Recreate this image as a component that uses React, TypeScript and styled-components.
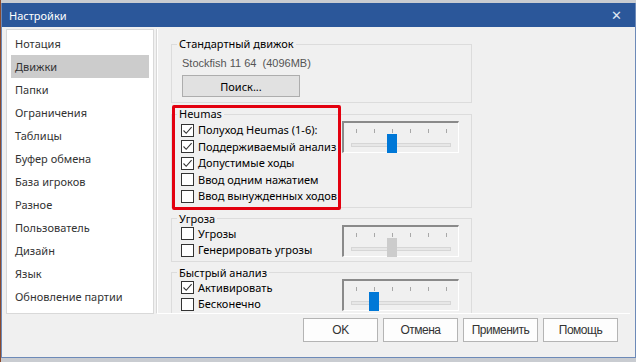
import styled, { createGlobalStyle } from "styled-components";

const GlobalStyle = createGlobalStyle`
  html, body {
    margin: 0;
    padding: 0;
    background: #ffffff;
  }
  * {
    box-sizing: border-box;
  }
`;

const Screen = styled.div`
  width: 638px;
  height: 362px;
  overflow: hidden;
  padding: 3px 2px 4px 1px;
  background: linear-gradient(to right, #8c4a2c 0, #8c4a2c 1px, #c9ccd1 1px, #c9ccd1 636px, #ffffff 636px);
  font-family: "Noto Sans", "Open Sans", sans-serif;
`;

const Dialog = styled.div`
  width: 635px;
  height: 355px;
  background: #f0f0f0;
  border: 1px solid #6d8ab8;
  border-top: none;
  display: flex;
  flex-direction: column;
`;

const TitleBar = styled.div`
  height: 24px;
  background: #2b579a;
  color: #ffffff;
  display: flex;
  align-items: center;
  justify-content: space-between;
  padding: 0 13px 0 7px;
  font-size: 11px;
`;

const Close = styled.span`
  font-size: 13px;
  color: #dfe6f1;
`;

const Body = styled.div`
  display: flex;
  padding: 2px 5px 0 4px;
`;

const Nav = styled.div`
  width: 148px;
  height: 285px;
  background: #ffffff;
  border: 1px solid #d9d9d9;
  padding: 2px 4px 0 4px;
  display: flex;
  flex-direction: column;
`;

const NavItem = styled.div<{ $active?: boolean }>`
  height: 23px;
  line-height: 23px;
  padding-left: 4px;
  font-size: 11px;
  color: #333333;
  background: ${(p) => (p.$active ? "#cccccc" : "transparent")};
`;

const Panel = styled.div`
  flex: 1;
  height: 285px;
  margin-left: 2px;
  border-left: 1px solid #d9d9d9;
  border-bottom: 1px solid #ffffff;
  box-shadow: inset 1px 0 0 #ffffff;
  overflow: hidden;
  padding: 7px 0 0 14px;
  display: flex;
  flex-direction: column;
  gap: 3px;
`;

const Group = styled.fieldset<{ $pb: number }>`
  position: relative;
  width: 301px;
  margin: 0;
  border: 1px solid #dcdcdc;
  padding: 0 0 ${(p) => p.$pb}px 9px;
  min-width: 0;
`;

const Legend = styled.legend`
  padding: 0 2px;
  margin-left: -4px;
  font-size: 11px;
  color: #000000;
  line-height: 16px;
`;

const EngineName = styled.div`
  font-family: "Liberation Sans", Arial, sans-serif;
  font-size: 11px;
  color: #555555;
  height: 20px;
  line-height: 20px;
  padding-left: 1px;
  margin-top: 1px;
`;

const SearchButton = styled.button`
  width: 118px;
  height: 22px;
  margin: 2px 0 0 1px;
  background: #e1e1e1;
  border: 1px solid #adadad;
  font-family: "Noto Sans", sans-serif;
  font-size: 11px;
  color: #000000;
  padding: 0;
`;

const GroupRow = styled.div<{ $shift?: number }>`
  display: flex;
  align-items: flex-start;
  margin-top: ${(p) => p.$shift ?? 0}px;
`;

const Checks = styled.div`
  width: 161px;
  display: flex;
  flex-direction: column;
`;

const CheckRow = styled.label`
  display: flex;
  align-items: center;
  height: 16.5px;
  line-height: 16px;
  font-size: 11px;
  color: #000000;
  white-space: nowrap;
`;

const Box = styled.span`
  width: 13px;
  height: 13px;
  border: 1px solid #333333;
  background: #ffffff;
  margin-right: 4px;
  display: flex;
  align-items: center;
  justify-content: center;
  flex: none;
`;

const SliderFrame = styled.div<{ $top: number }>`
  width: 117px;
  height: 32px;
  margin-top: ${(p) => p.$top}px;
  border-top: 2px solid #8a8a8a;
  border-left: 2px solid #8a8a8a;
  border-right: 1px solid #ffffff;
  border-bottom: 1px solid #ffffff;
  background: #f0f0f0;
  flex: none;
`;

const Highlight = styled.div`
  position: absolute;
  left: 0;
  top: -17px;
  width: 169px;
  height: 105px;
  border: 3px solid #e3000f;
  border-radius: 2px;
  pointer-events: none;
`;

const Footer = styled.div`
  flex: 1;
  display: flex;
  justify-content: flex-end;
  align-items: flex-start;
  gap: 5px;
  padding: 4px 17px 0 0;
`;

const DialogButton = styled.button`
  width: 75px;
  height: 24px;
  background: #fdfdfd;
  border: 1px solid #b4b4b4;
  font-family: "Liberation Sans", Arial, sans-serif;
  font-size: 12px;
  letter-spacing: -0.5px;
  color: #333333;
  padding: 0;
`;

function Check({ checked, label }: { checked?: boolean; label: string }) {
  return (
    <CheckRow>
      <Box>
        {checked && (
          <svg width="11" height="11" viewBox="0 0 11 11">
            <path d="M1.5 5.5 L4.2 8.3 L9.6 2.2" fill="none" stroke="#333" strokeWidth="1.1" />
          </svg>
        )}
      </Box>
      {label}
    </CheckRow>
  );
}

function Slider({ value, active, top }: { value: number; active?: boolean; top: number }) {
  const ticks = [0, 1, 2, 3, 4, 5];
  const x = 12 + value * 18;
  return (
    <SliderFrame $top={top}>
      <svg width="114" height="30" viewBox="0 0 114 30">
        {ticks.map((t) => (
          <line key={t} x1={12.5 + t * 18} y1="6" x2={12.5 + t * 18} y2="10" stroke="#a8a8a8" strokeWidth="1" />
        ))}
        <rect x="7.5" y="20.5" width="99" height="3" fill="#e7e7e7" stroke="#d6d6d6" />
        <rect x={x - 5} y="11" width="10" height="19" fill={active ? "#0078d7" : "#cccccc"} />
      </svg>
    </SliderFrame>
  );
}

const navItems = [
  "Нотация",
  "Движки",
  "Папки",
  "Ограничения",
  "Таблицы",
  "Буфер обмена",
  "База игроков",
  "Разное",
  "Пользователь",
  "Дизайн",
  "Язык",
  "Обновление партии",
];

function App() {
  return (
    <Screen>
      <GlobalStyle />
      <Dialog>
        <TitleBar>
          <span>Настройки</span>
          <Close>✕</Close>
        </TitleBar>
        <Body>
          <Nav>
            {navItems.map((n) => (
              <NavItem key={n} $active={n === "Движки"}>
                {n}
              </NavItem>
            ))}
          </Nav>
          <Panel>
            <Group $pb={5}>
              <Legend>Стандартный движок</Legend>
              <EngineName>Stockfish 11 64&nbsp;&nbsp;(4096MB)</EngineName>
              <SearchButton>Поиск...</SearchButton>
            </Group>
            <Group $pb={2}>
              <Legend>Heumas</Legend>
              <Highlight />
              <GroupRow>
                <Checks>
                  <Check checked label="Полуход Heumas (1-6):" />
                  <Check checked label="Поддерживаемый анализ" />
                  <Check checked label="Допустимые ходы" />
                  <Check label="Ввод одним нажатием" />
                  <Check label="Ввод вынужденных ходов" />
                </Checks>
                <Slider value={2} active top={-1} />
              </GroupRow>
            </Group>
            <Group $pb={2}>
              <Legend>Угроза</Legend>
              <GroupRow $shift={-1}>
                <Checks>
                  <Check label="Угрозы" />
                  <Check label="Генерировать угрозы" />
                </Checks>
                <Slider value={2} top={-1} />
              </GroupRow>
            </Group>
            <Group $pb={3}>
              <Legend>Быстрый анализ</Legend>
              <GroupRow $shift={-1}>
                <Checks>
                  <Check checked label="Активировать" />
                  <Check label="Бесконечно" />
                </Checks>
                <Slider value={1} active top={-1} />
              </GroupRow>
            </Group>
          </Panel>
        </Body>
        <Footer>
          <DialogButton>OK</DialogButton>
          <DialogButton>Отмена</DialogButton>
          <DialogButton>Применить</DialogButton>
          <DialogButton>Помощь</DialogButton>
        </Footer>
      </Dialog>
    </Screen>
  );
}

export default App;
